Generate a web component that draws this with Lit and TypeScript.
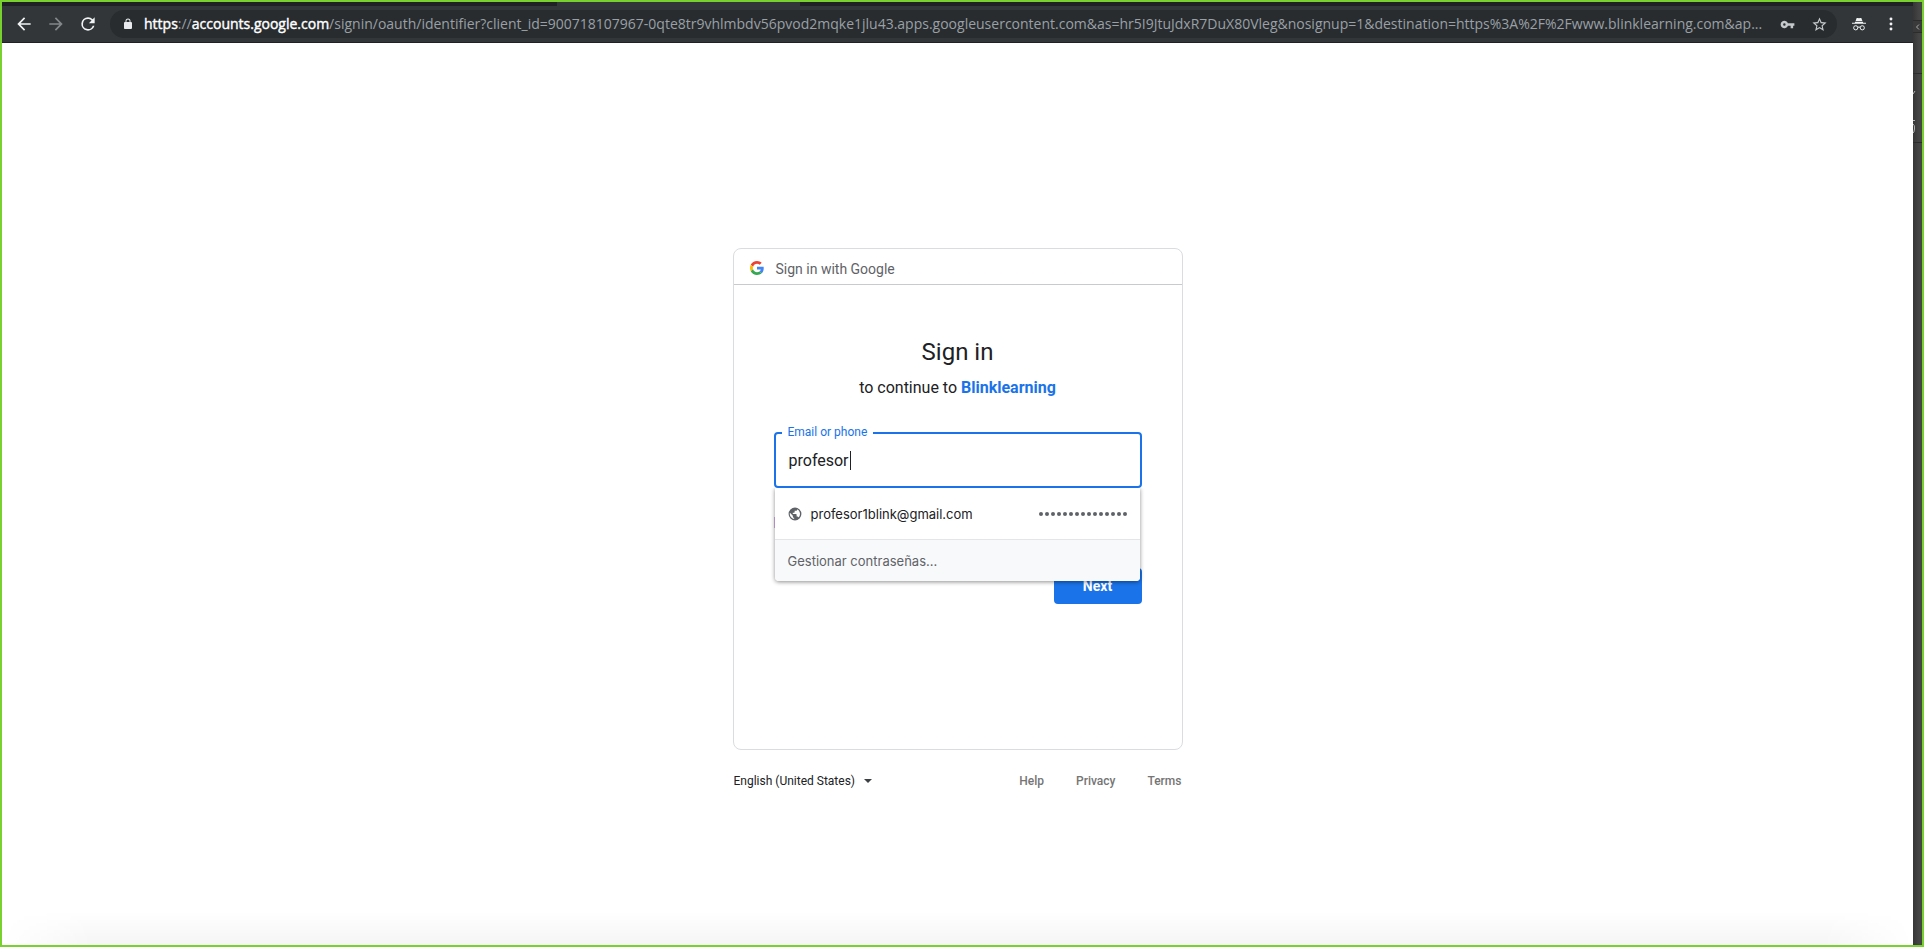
import { LitElement, html, css, svg } from "lit";
import { customElement, property, state } from "lit/decorators.js";

const icons = {
  back: svg`<path d="M20 11H7.83l5.59-5.59L12 4l-8 8 8 8 1.41-1.41L7.83 13H20z"/>`,
  forward: svg`<path d="M12 4l-1.41 1.41L16.17 11H4v2h12.17l-5.58 5.59L12 20l8-8z"/>`,
  reload: svg`<path d="M17.65 6.35A7.96 7.96 0 0 0 12 4a8 8 0 1 0 7.73 10h-2.08A6 6 0 1 1 12 6c1.66 0 3.14.69 4.22 1.78L13 11h7V4z"/>`,
  lock: svg`<path d="M18 8h-1V6A5 5 0 0 0 7 6v2H6a2 2 0 0 0-2 2v10c0 1.1.9 2 2 2h12a2 2 0 0 0 2-2V10a2 2 0 0 0-2-2zM15.1 8H8.9V6a3.1 3.1 0 0 1 6.2 0z"/>`,
  key: svg`<path d="M12.65 10A6 6 0 1 0 12.65 14H17v4h4v-4h2v-4zM7 14a2 2 0 1 1 0-4 2 2 0 0 1 0 4z"/>`,
  star: svg`<path d="M22 9.24l-7.19-.62L12 2 9.19 8.63 2 9.24l5.46 4.73L5.82 21 12 17.27 18.18 21l-1.63-7.03zM12 15.4l-3.76 2.27 1-4.28-3.32-2.88 4.38-.38L12 6.1l1.71 4.04 4.38.38-3.32 2.88 1 4.28z"/>`,
  incognito: svg`<path d="M8 1.5h2.2l1.8.8 1.8-.8H16l1.8 5.3H6.2zM5.4 8.3h13.2l.6 1.4H24v2H0v-2h4.8z"/><g fill="none" stroke="currentColor" stroke-width="1.7"><circle cx="6.4" cy="18.5" r="3.6"/><circle cx="17.6" cy="18.5" r="3.6"/><path d="M10 17.7c1.3-.8 2.7-.8 4 0"/></g>`,
  more: svg`<circle cx="12" cy="4.5" r="2.2"/><circle cx="12" cy="12" r="2.2"/><circle cx="12" cy="19.5" r="2.2"/>`,
  globe: svg`<path d="M12 1a11 11 0 1 0 0 22 11 11 0 0 0 0-22zm-1.5 19.7A8.9 8.9 0 0 1 3.3 10l5 5v1.2c0 1.2 1 2.2 2.2 2.2zM18 17.9c-.3-.9-1.1-1.5-2.1-1.5h-1.1v-3.3c0-.6-.5-1.1-1.1-1.1H8.2V9.8h2.1c.6 0 1.1-.5 1.1-1.1V6.5h2.2c1.2 0 2.2-1 2.2-2.2v-.5A8.9 8.9 0 0 1 18 17.9z"/>`,
};

const icon = (name: keyof typeof icons, size: number) => html`
  <svg width=${size} height=${size} viewBox="0 0 24 24" fill="currentColor" aria-hidden="true">${icons[name]}</svg>
`;

@customElement("browser-toolbar")
export class BrowserToolbar extends LitElement {
  @property() scheme = "";
  @property() host = "";
  @property() path = "";

  static styles = css`
    :host { display: block; font: 14px/20px "Open Sans", sans-serif; }
    * { box-sizing: border-box; }
    .tabs { display: flex; height: 4px; background: #202124; }
    .tab { width: 243px; margin-left: 555px; background: #323639; }
    .bar {
      display: flex; align-items: center; gap: 6px; height: 37px; padding: 0 6px;
      background: #323639; border-bottom: 1px solid #202124;
    }
    .group { display: flex; }
    button {
      display: grid; place-items: center; width: 32px; height: 28px; padding: 0;
      border: 0; background: none; color: #f1f3f4;
    }
    button:disabled { color: #85888a; }
    .box {
      flex: 1; min-width: 0; display: flex; align-items: center; gap: 6px; height: 28px;
      padding: 0 2px 0 8px; border-radius: 14px; background: #282c2f; color: #e8eaed;
    }
    .lock { display: grid; place-items: center; width: 20px; }
    .url { flex: 1; min-width: 0; overflow: hidden; white-space: nowrap; color: #9aa0a6; }
    .strong { color: #fff; -webkit-text-stroke: 0.4px #fff; }
    .box button { color: #c6c9cc; }
  `;

  render() {
    return html`
      <div class="tabs"><div class="tab"></div></div>
      <div class="bar">
        <div class="group">
          <button aria-label="Back">${icon("back", 20)}</button>
          <button aria-label="Forward" disabled>${icon("forward", 20)}</button>
          <button aria-label="Reload">${icon("reload", 20)}</button>
        </div>
        <div class="box">
          <span class="lock">${icon("lock", 12)}</span>
          <div class="url" role="textbox" aria-label="Address" tabindex="0"><span class="strong">${this.scheme}</span>://<span class="strong">${this.host}</span>${this.path}</div>
          <div class="group">
            <button aria-label="Saved passwords">${icon("key", 15)}</button>
            <button aria-label="Bookmark">${icon("star", 17)}</button>
          </div>
        </div>
        <div class="group">
          <button aria-label="Incognito">${icon("incognito", 14)}</button>
          <button aria-label="Menu">${icon("more", 16)}</button>
        </div>
      </div>
    `;
  }
}

@customElement("sign-in-form")
export class SignInForm extends LitElement {
  @state() private email = "profesor";

  static styles = css`
    :host { display: block; font: 14px/20px Roboto, sans-serif; color: #202124; }
    * { box-sizing: border-box; }
    a { color: #1a73e8; text-decoration: none; }
    .card { min-height: 502px; border: 1px solid #dadce0; border-radius: 8px; }
    .head {
      display: flex; align-items: center; gap: 12px; height: 36px; padding: 4px 16px 0;
      border-bottom: 1px solid #c8cacd; color: #5f6368;
    }
    .head svg { margin-bottom: 2px; }
    form { padding: 49px 40px 0; }
    h1 { margin: 0; font-size: 24px; line-height: 36px; font-weight: 400; text-align: center; }
    .sub { margin: 6px 0 32px; font-size: 16px; line-height: 24px; text-align: center; }
    .sub a { font-weight: 700; }
    .field { position: relative; }
    input {
      display: block; width: 100%; height: 56px; padding: 0 13px; outline: 0;
      border: 2px solid #1a73e8; border-radius: 4px; background: #fff;
      color: #202124; font: 16px/24px Roboto, sans-serif;
    }
    label {
      position: absolute; left: 8px; top: -8px; padding: 0 6px; background: #fff;
      color: #1a73e8; font-size: 12px; line-height: 16px;
    }
    .caret { position: absolute; left: 76px; top: 19px; width: 1px; height: 19px; background: #202124; }
    .menu {
      position: absolute; left: 1px; right: 2px; top: 56px; overflow: hidden;
      border-radius: 0 0 4px 4px; background: #fff; font: 13px/20px Inter, sans-serif;
      box-shadow: 0 1px 4px rgba(0, 0, 0, 0.45); clip-path: inset(0 -6px -6px);
    }
    .menu button {
      display: flex; align-items: center; width: 100%; padding: 0 13px; border: 0;
      background: #fff; color: #202124; font: inherit; text-align: left;
    }
    .menu .option { gap: 9px; height: 51px; }
    .menu .manage { height: 42px; border-top: 1px solid #e3e5e8; background: #f8f9fb; color: #5f6368; }
    .globe { display: grid; color: #5f6368; }
    .dots { display: flex; gap: 2px; margin-left: auto; }
    .dots i { width: 4px; height: 4px; border-radius: 50%; background: #5f6368; }
    .forgot { display: block; width: max-content; margin-top: 25px; font-weight: 500; }
    .actions { display: flex; justify-content: flex-end; margin-top: 35px; }
    .next {
      width: 88px; height: 36px; border: 0; border-radius: 4px; background: #1a73e8;
      color: #fff; font: 700 14px/20px Roboto, sans-serif;
    }
    footer { display: flex; align-items: center; gap: 32px; padding: 23px 1px 0; font-size: 12px; line-height: 16px; }
    .language { display: flex; align-items: center; gap: 8px; margin-right: auto; }
    select {
      appearance: none; padding: 0; border: 0; background: none; color: #202124;
      font: 12px/16px Roboto, sans-serif;
    }
    .arrow { border: 4px solid transparent; border-top-color: #3c4043; border-bottom: 0; }
    footer a { color: #757575; font-weight: 500; }
  `;

  private onInput(e: Event) {
    this.email = (e.target as HTMLInputElement).value;
  }

  render() {
    return html`
      <section class="card">
        <div class="head">
          <svg width="14" height="14" viewBox="0 0 48 48" aria-hidden="true">
            <path fill="#EA4335" d="M24 9.5c3.54 0 6.71 1.22 9.21 3.6l6.85-6.85C35.9 2.38 30.47 0 24 0 14.62 0 6.51 5.38 2.56 13.22l7.98 6.19C12.43 13.72 17.74 9.5 24 9.5z"/>
            <path fill="#4285F4" d="M46.98 24.55c0-1.57-.15-3.09-.38-4.55H24v9.02h12.94c-.58 2.96-2.26 5.48-4.78 7.18l7.73 6c4.51-4.18 7.09-10.36 7.09-17.65z"/>
            <path fill="#FBBC05" d="M10.53 28.59c-.48-1.45-.76-2.99-.76-4.59s.27-3.14.76-4.59l-7.98-6.19C.92 16.46 0 20.12 0 24c0 3.88.92 7.54 2.56 10.78z"/>
            <path fill="#34A853" d="M24 48c6.48 0 11.93-2.13 15.89-5.81l-7.73-6c-2.15 1.45-4.92 2.3-8.16 2.3-6.26 0-11.57-4.22-13.47-9.91l-7.98 6.19C6.51 42.62 14.62 48 24 48z"/>
          </svg>
          <span>Sign in with Google</span>
        </div>
        <form @submit=${(e: Event) => e.preventDefault()}>
          <h1>Sign in</h1>
          <p class="sub">to continue to <a href="#app">Blinklearning</a></p>
          <div class="field">
            <input id="email" type="text" autocomplete="off" .value=${this.email} @input=${this.onInput} />
            <label for="email">Email or phone</label>
            <span class="caret"></span>
            <div class="menu">
              <button type="button" class="option">
                <span class="globe">${icon("globe", 14)}</span>
                <span>profesor1blink@gmail.com</span>
                <span class="dots">${Array.from({ length: 15 }, () => html`<i></i>`)}</span>
              </button>
              <button type="button" class="manage">Gestionar contraseñas...</button>
            </div>
          </div>
          <a class="forgot" href="#forgot">Forgot email?</a>
          <div class="actions"><button class="next">Next</button></div>
        </form>
      </section>
      <footer>
        <div class="language">
          <select aria-label="Language"><option>English (United States)</option></select>
          <span class="arrow"></span>
        </div>
        <a href="#help">Help</a>
        <a href="#privacy">Privacy</a>
        <a href="#terms">Terms</a>
      </footer>
    `;
  }
}

@customElement("app-root")
export class AppRoot extends LitElement {
  static styles = css`
    :host {
      display: flex; box-sizing: border-box; height: 100vh; overflow: hidden;
      border: 2px solid #78d12f; background: #fff;
    }
    .window { position: relative; flex: 1; min-width: 0; display: flex; flex-direction: column; }
    main { flex: 1; display: flex; justify-content: center; align-items: flex-start; padding-top: 205px; }
    sign-in-form { width: 450px; max-width: 100%; }
    .shade {
      position: absolute; left: 0; right: 0; bottom: 0; height: 34px; pointer-events: none;
      background: linear-gradient(transparent, rgba(0, 0, 0, 0.04));
      mask-image: linear-gradient(90deg, transparent, #000 90px, #000 calc(100% - 90px), transparent);
    }
    .behind {
      display: flex; flex-direction: column; width: 9px; overflow: hidden;
      background: linear-gradient(90deg, #363636, #454545 6px);
    }
    .behind div { box-sizing: border-box; border-bottom: 1px solid #2c2c2c; }
    .a { height: 19px; }
    .b { height: 12px; background: #3a3a3a; display: grid; place-items: center; }
    .c { height: 41px; }
    .d { height: 69px; padding-top: 17px; }
    .d svg { display: block; }
  `;

  render() {
    return html`
      <div class="window">
        <browser-toolbar
          scheme="https"
          host="accounts.google.com"
          path="/signin/oauth/identifier?client_id=900718107967-0qte8tr9vhlmbdv56pvod2mqke1jlu43.apps.googleusercontent.com&as=hr5I9JtuJdxR7DuX80Vleg&nosignup=1&destination=https%3A%2F%2Fwww.blinklearning.com&ap..."
        ></browser-toolbar>
        <main><sign-in-form></sign-in-form></main>
        <div class="shade"></div>
      </div>
      <div class="behind" aria-hidden="true">
        <div class="a"></div>
        <div class="b">
          <svg width="5" height="6" viewBox="0 0 5 6" fill="none" stroke="#aaa"><path d="M4 .5L1.5 3 4 5.5"/></svg>
        </div>
        <div class="c"></div>
        <div class="d">
          <svg width="3" height="44" viewBox="0 0 3 44" fill="none" stroke="#b5b5b5">
            <path d="M0 3L2 0M0 29.5h2M0 33q2 1 1.5 5T0 42"/>
          </svg>
        </div>
      </div>
    `;
  }
}
